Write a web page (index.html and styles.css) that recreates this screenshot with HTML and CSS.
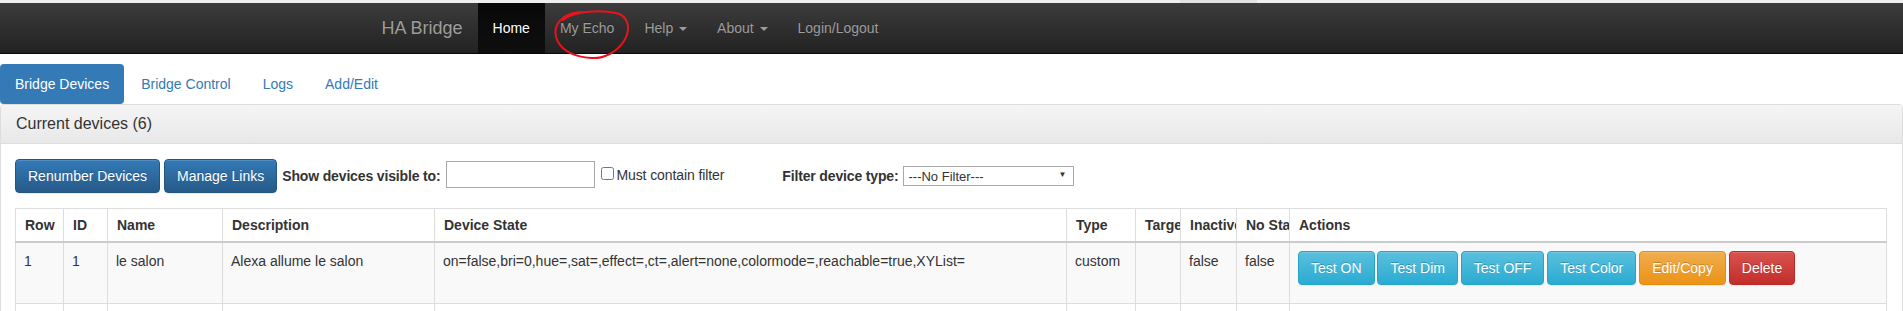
FILE: index.html
```html
<!DOCTYPE html>
<html>
<head>
    <title>HA Bridge</title>
    <link rel="stylesheet" href="styles.css">
</head>
<body>
    <div class="top-strip"><span></span></div>
    <div class="navbar">
        <div class="navbar-inner">
            <div class="brand">HA Bridge</div>
            <ul class="nav-links">
                <li class="active"><a href="#">Home</a></li>
                <li><a href="#">My Echo</a></li>
                <li><a href="#">Help <span class="caret"></span></a></li>
                <li><a href="#">About <span class="caret"></span></a></li>
                <li><a href="#">Login/Logout</a></li>
            </ul>
        </div>
    </div>

    <!-- red marker drawn over the screenshot -->
    <svg class="marker" width="82" height="56" viewBox="0 0 82 56">
        <path d="M13 13 C22 5, 48 2, 66 6 C79 9, 81 22, 74 34 C67 45, 54 52, 41 51 C27 50, 14 45, 8 35 C3 25, 5 17, 14 10 C20 6, 28 5, 34 5" fill="none" stroke="#e8141b" stroke-width="2" stroke-linecap="round"/>
    </svg>

    <ul class="tabs">
        <li class="active"><a href="#">Bridge Devices</a></li>
        <li><a href="#">Bridge Control</a></li>
        <li><a href="#">Logs</a></li>
        <li><a href="#">Add/Edit</a></li>
    </ul>

    <div class="panel">
        <div class="panel-heading">
            <h2 class="panel-title">Current devices (6)</h2>
        </div>
        <div class="panel-body">
            <div class="toolbar">
                <button class="btn btn-primary">Renumber Devices</button>
                <button class="btn btn-primary">Manage Links</button>
                <label class="show-label">Show devices visible to:</label>
                <input type="text" class="filter-input">
                <input type="checkbox" class="filter-check">
                <span class="check-text">Must contain filter</span>
                <label class="type-label">Filter device type:</label>
                <span class="select-wrap">
                    <select class="type-select">
                        <option>---No Filter---</option>
                    </select>
                </span>
            </div>

            <table class="devices">
                <colgroup>
                    <col style="width: 48px">
                    <col style="width: 44px">
                    <col style="width: 115px">
                    <col style="width: 212px">
                    <col style="width: 632px">
                    <col style="width: 69px">
                    <col style="width: 45px">
                    <col style="width: 56px">
                    <col style="width: 53px">
                    <col>
                </colgroup>
                <thead>
                    <tr>
                        <th>Row</th>
                        <th>ID</th>
                        <th>Name</th>
                        <th>Description</th>
                        <th>Device State</th>
                        <th>Type</th>
                        <th>Target</th>
                        <th>Inactive</th>
                        <th>No State</th>
                        <th>Actions</th>
                    </tr>
                </thead>
                <tbody>
                    <tr>
                        <td>1</td>
                        <td>1</td>
                        <td>le salon</td>
                        <td>Alexa allume le salon</td>
                        <td>on=false,bri=0,hue=,sat=,effect=,ct=,alert=none,colormode=,reachable=true,XYList=</td>
                        <td>custom</td>
                        <td></td>
                        <td>false</td>
                        <td>false</td>
                        <td class="actions">
                            <button class="btn btn-info">Test ON</button>
                            <button class="btn btn-info">Test Dim</button>
                            <button class="btn btn-info">Test OFF</button>
                            <button class="btn btn-info">Test Color</button>
                            <button class="btn btn-warning">Edit/Copy</button>
                            <button class="btn btn-danger">Delete</button>
                        </td>
                    </tr>
                    <tr class="next-row">
                        <td></td>
                        <td></td>
                        <td></td>
                        <td></td>
                        <td></td>
                        <td></td>
                        <td></td>
                        <td></td>
                        <td></td>
                        <td></td>
                    </tr>
                </tbody>
            </table>
        </div>
    </div>
</body>
</html>
```

FILE: styles.css
```css
html, body { margin: 0; padding: 0; overflow: hidden; }
body {
    font-family: "Liberation Sans", Arial, sans-serif;
    font-size: 14px;
    line-height: 20px;
    color: #333;
    background: #fff;
}

.top-strip { height: 3px; background: #efefef; }
.top-strip span { display: block; width: 77px; height: 3px; margin-left: 1180px; background: #e2e2e2; }

/* navbar */
.navbar {
    height: 50px;
    background: linear-gradient(to bottom, #3c3c3c 0, #222 100%);
    border-bottom: 1px solid #080808;
}
.navbar-inner { width: 1170px; margin: 0 auto; display: flex; }
.brand {
    padding: 15px;
    font-size: 18px;
    line-height: 20px;
    color: #9d9d9d;
    text-shadow: 0 -1px 0 rgba(0,0,0,.25);
}
.nav-links { display: flex; list-style: none; margin: 0; padding: 0; }
.nav-links a {
    display: block;
    padding: 15px;
    line-height: 20px;
    color: #9d9d9d;
    text-decoration: none;
    text-shadow: 0 -1px 0 rgba(0,0,0,.25);
}
.nav-links .active a { color: #fff; background: linear-gradient(to bottom, #080808 0, #0f0f0f 100%); }
.caret {
    display: inline-block;
    width: 0;
    height: 0;
    margin-left: 2px;
    vertical-align: middle;
    border-top: 4px solid;
    border-left: 4px solid transparent;
    border-right: 4px solid transparent;
}

.marker { position: absolute; left: 550px; top: 7px; }

/* tabs */
.tabs { display: flex; list-style: none; margin: 10px 0 0; padding: 0; }
.tabs li + li { margin-left: 2px; }
.tabs a {
    display: block;
    padding: 10px 15px;
    color: #337ab7;
    text-decoration: none;
    border-radius: 4px;
}
.tabs .active a { color: #fff; background: #337ab7; }

/* panel */
.panel {
    border: 1px solid #ddd;
    border-radius: 4px;
    box-shadow: 0 1px 2px rgba(0,0,0,.05);
}
.panel-heading {
    padding: 10px 15px;
    background: linear-gradient(to bottom, #f5f5f5 0, #e8e8e8 100%);
    border-bottom: 1px solid #ddd;
    border-radius: 3px 3px 0 0;
}
.panel-title { margin: 0; font-size: 16px; font-weight: normal; line-height: 18px; color: #333; }
.panel-body { padding: 15px 15px 15px 14px; }

/* buttons */
.btn {
    display: inline-block;
    padding: 6px 12px;
    font-family: inherit;
    font-size: 14px;
    line-height: 20px;
    color: #fff;
    border: 1px solid transparent;
    border-radius: 4px;
    text-shadow: 0 -1px 0 rgba(0,0,0,.2);
    box-shadow: inset 0 1px 0 rgba(255,255,255,.15), 0 1px 1px rgba(0,0,0,.075);
    cursor: pointer;
    white-space: nowrap;
}
.btn-primary { background: linear-gradient(to bottom, #337ab7 0, #265a88 100%); border-color: #245580; }
.btn-info { background: linear-gradient(to bottom, #5bc0de 0, #2aabd2 100%); border-color: #28a4c9; }
.btn-warning { background: linear-gradient(to bottom, #f0ad4e 0, #eb9316 100%); border-color: #e38d13; }
.btn-danger { background: linear-gradient(to bottom, #d9534f 0, #c12e2a 100%); border-color: #b92c28; }

/* toolbar */
.toolbar { display: flex; align-items: center; margin-bottom: 15px; }
.toolbar .btn + .btn { margin-left: 4px; }
.show-label, .type-label { font-weight: bold; letter-spacing: -0.15px; }
.show-label { margin-left: 5px; margin-right: 6px; }
.filter-input {
    width: 149px;
    height: 27px;
    box-sizing: border-box;
    margin: 0 0 3px;
    padding: 1px 2px;
    border: 1px solid #a9a9a9;
    font-family: inherit;
    font-size: 14px;
}
.filter-check { width: 13px; height: 13px; margin: 0 2px 6px 6px; }
.check-text { margin-bottom: 2px; letter-spacing: -0.1px; }
.type-label { margin-left: 58px; margin-right: 5px; }
.select-wrap { position: relative; display: inline-block; }
.type-select {
    appearance: none;
    -webkit-appearance: none;
    width: 171px;
    height: 20px;
    padding: 0 4px;
    border: 1px solid #a9a9a9;
    border-radius: 0;
    background: #fff;
    color: #333;
    font-family: inherit;
    font-size: 13px;
}
.select-wrap::after {
    content: "\25BC";
    position: absolute;
    right: 8px;
    top: 4px;
    font-size: 8px;
    line-height: 10px;
    color: #333;
}

/* table */
.devices {
    width: 100%;
    border-collapse: collapse;
    table-layout: fixed;
    border: 1px solid #ddd;
}
.devices th, .devices td {
    border: 1px solid #ddd;
    padding: 8px;
    text-align: left;
    vertical-align: top;
    white-space: nowrap;
    overflow: hidden;
}
.devices thead th { padding: 6px 8px 6px 9px; border-bottom: 2px solid #ccc; font-weight: bold; }
.devices tbody tr:nth-child(odd) { background: #f9f9f9; }
.devices td.actions { padding-bottom: 18px; }
.actions .btn { margin-right: -1px; }
.devices .next-row td { height: 40px; }
```
